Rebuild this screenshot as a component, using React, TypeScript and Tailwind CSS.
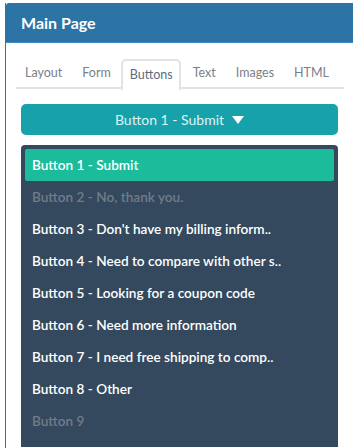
const tabs = ["Layout", "Form", "Buttons", "Text", "Images", "HTML"];

const items = [
  { label: "Button 1 - Submit", state: "active" },
  { label: "Button 2 - No, thank you.", state: "disabled" },
  { label: "Button 3 - Don't have my billing inform..", state: "" },
  { label: "Button 4 - Need to compare with other s..", state: "" },
  { label: "Button 5 - Looking for a coupon code", state: "" },
  { label: "Button 6 - Need more information", state: "" },
  { label: "Button 7 - I need free shipping to comp..", state: "" },
  { label: "Button 8 - Other", state: "" },
  { label: "Button 9", state: "disabled" },
];

const App = () => (
  <div className="w-[353px] h-[448px] overflow-hidden bg-white pt-[3px] pl-[5px] font-['Lato',sans-serif]">
    <div className="h-full border-l border-[#2c74a5]">
      <div className="h-[40px] bg-[#2c74a5] rounded-tl-[3px] border-b border-[#3b89c9] flex items-center pl-[15px]">
        <span className="text-white font-bold text-[16px]">Main Page</span>
      </div>
      <div className="px-[10px] pt-[16px]">
        <div className="flex border-b-2 border-[#e1e3e6] w-[328px] h-[30px]">
          {tabs.map((t) =>
            t === "Buttons" ? (
              <div
                key={t}
                className="h-[31px] pl-[7px] pr-[6px] mr-[2px] border-2 border-b-0 border-[#e1e3e6] rounded-t-[5px] bg-white flex items-center text-[12.5px] text-[#5d6b7d]"
              >
                {t}
              </div>
            ) : (
              <div key={t} className="h-[29px] px-[10px] first:pl-[9px] flex items-center text-[12.5px] text-[#7a8088]">
                {t}
              </div>
            )
          )}
        </div>
      </div>
      <div className="px-[15px] pt-[15px]">
        <div className="h-[31px] rounded-[5px] bg-[#17a2ab] flex items-center justify-center gap-[8px] text-[14px] text-[#dff3f3]">
          <span>Button 1 - Submit</span>
          <svg width="12" height="8" viewBox="0 0 12 8">
            <path d="M0 0 L12 0 L6 8 Z" fill="#ffffff" />
          </svg>
        </div>
        <div className="mt-[10px] bg-[#34495e] rounded-t-[4px] px-[4px] pt-[4px] pb-[10px]">
          {items.map((it) => (
            <div
              key={it.label}
              className={
                "h-[32px] px-[7px] flex items-center text-[13.6px] font-semibold rounded-[2px] whitespace-nowrap " +
                (it.state === "active"
                  ? "bg-[#1abc9c] text-white"
                  : it.state === "disabled"
                  ? "text-[#717c87] font-normal"
                  : "text-white")
              }
            >
              {it.label}
            </div>
          ))}
        </div>
      </div>
    </div>
  </div>
);

export default App;
